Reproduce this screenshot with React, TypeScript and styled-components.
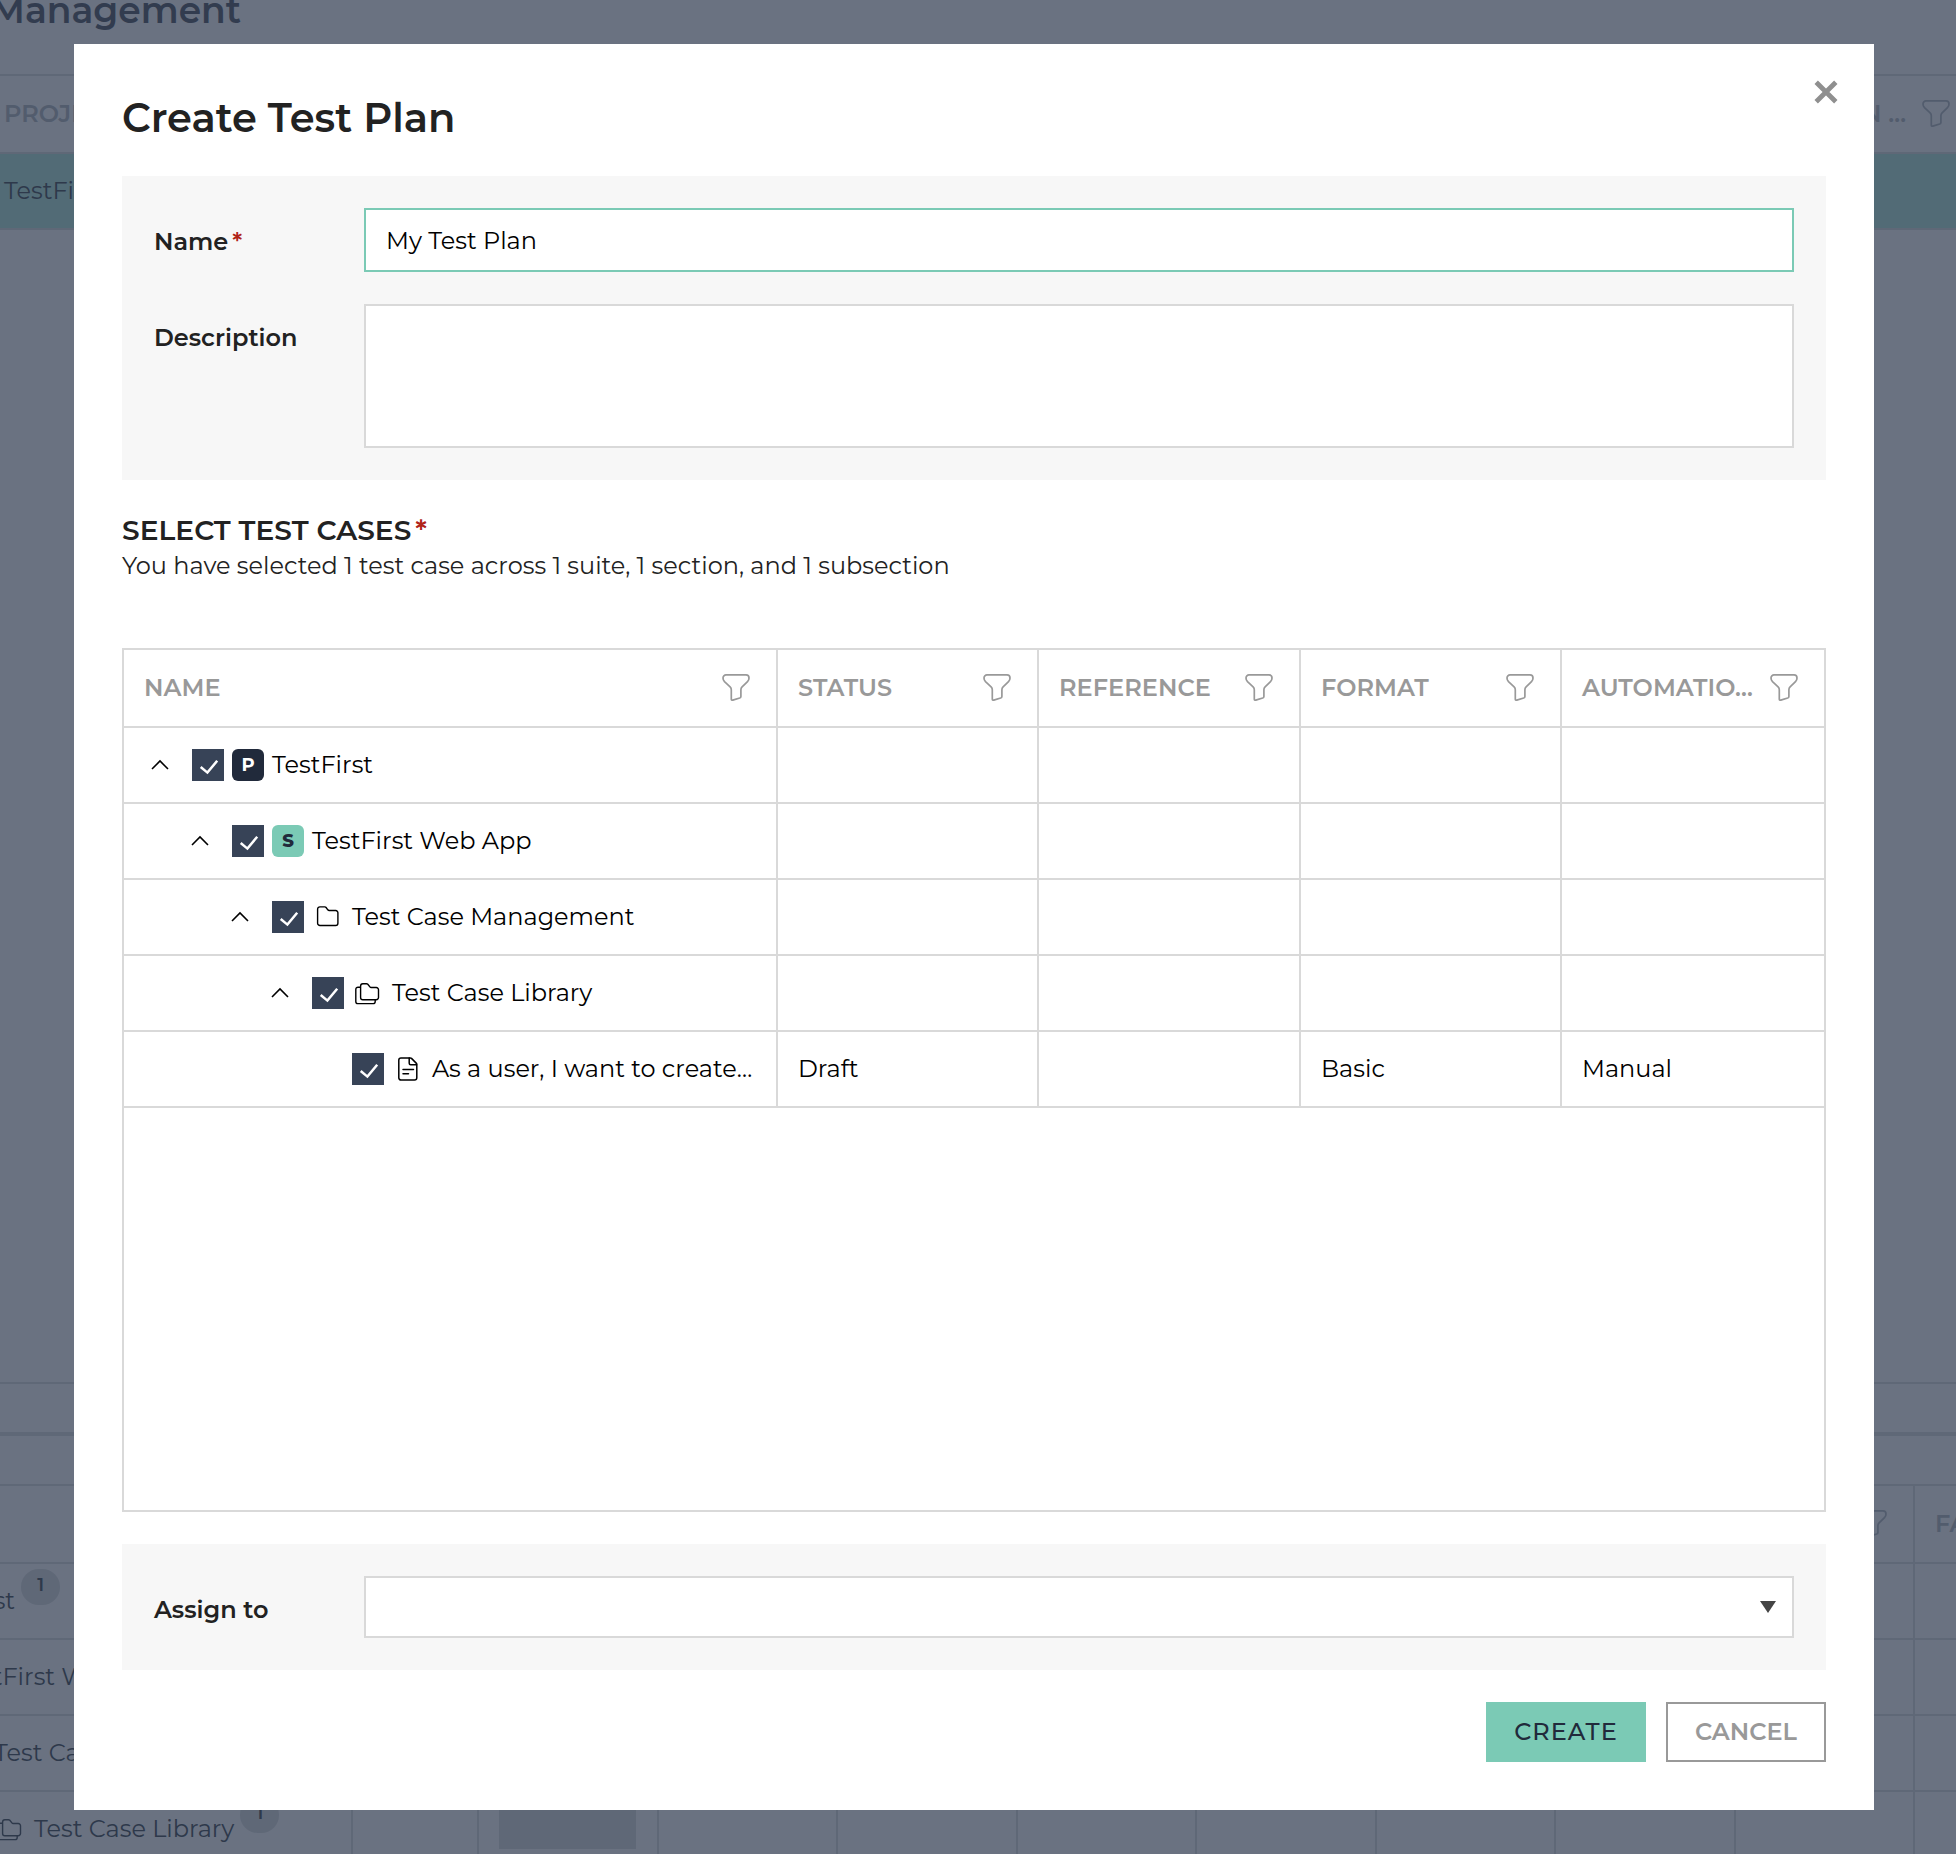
import React from 'react';
import styled, { createGlobalStyle, css } from 'styled-components';

const color = {
  backdrop: '#6a7281',
  backdropLine: '#5f6877',
  backdropMuted: '#525c6d',
  backdropText: '#2e394b',
  backdropTitle: '#323c4f',
  backdropRow: '#526b76',
  line: '#d9d9d9',
  muted: '#999999',
  ink: '#222222',
  mint: '#7bcab5',
  navy: '#212a3b',
  slate: '#374357',
  panel: '#f7f7f7',
  danger: '#b02318',
};

const GlobalStyle = createGlobalStyle`
  *, *::before, *::after { box-sizing: border-box; }
  body {
    margin: 0;
    overflow: hidden;
    background: ${color.backdrop};
    font-family: Montserrat, Inter, 'Liberation Sans', sans-serif;
    font-size: 24px;
  }
  button, input, textarea { font: inherit; border-radius: 0; margin: 0; }
`;

/* ---------- icons ---------- */

const IconSvg = styled.svg`
  display: block;
  flex: none;
  fill: none;
  stroke: currentColor;
  stroke-linecap: round;
  stroke-linejoin: round;
`;

const FilterIcon = () => (
  <IconSvg width="28" height="28" viewBox="0 0 28 28" strokeWidth="1.7">
    <path d="M4 .9h20a3 3 0 0 1 3 3c0 1.700-.4 2.700-1.500 3.800l-5.400 5.200c-.9.9-1.200 1.700-1.200 2.800v6.700c0 .8-.4 1.300-1.200 1.600l-6.900 2.100c-.9.300-1.500-.1-1.500-.9v-9.500c0-1.100-.3-1.900-1.200-2.800L2.500 7.700C1.400 6.600 1 5.600 1 3.900a3 3 0 0 1 3-3z" />
  </IconSvg>
);

const CloseIcon = () => (
  <IconSvg width="24" height="24" viewBox="0 0 24 24" strokeWidth="4.800">
    <path d="M2.200 2.200l19.600 19.600M21.800 2.200L2.200 21.800" strokeLinecap="butt" />
  </IconSvg>
);

const ChevronUpIcon = () => (
  <IconSvg width="32" height="32" viewBox="0 0 32 32" strokeWidth="1.6">
    <path d="M8 20L16 12 24 20" strokeLinecap="butt" strokeLinejoin="miter" />
  </IconSvg>
);

const CheckIcon = () => (
  <IconSvg width="32" height="32" viewBox="0 0 32 32" strokeWidth="2.500">
    <path d="M8.700 18l6.700 5.600L25.200 11.800" strokeLinecap="butt" strokeLinejoin="miter" />
  </IconSvg>
);

const FolderIcon = () => (
  <IconSvg width="32" height="32" viewBox="0 0 32 32" strokeWidth="1.400">
    <path
      transform="translate(4.700 5)"
      d="M.9 3.200A2.300 2.300 0 0 1 3.200.9h4.900c.6 0 1 .2 1.300.6l1.700 2.300c.4.500.8.7 1.400.7h6.500a2.200 2.200 0 0 1 2.200 2.200v10.500a2.300 2.300 0 0 1-2.300 2.300H3.200a2.300 2.300 0 0 1-2.300-2.300z"
    />
  </IconSvg>
);

const FoldersIcon = () => (
  <IconSvg width="32" height="32" viewBox="0 0 32 32" strokeWidth="1.400">
    <g transform="translate(3 6)">
      <path d="M5.600 3A2.200 2.200 0 0 1 7.800.8h3.700c.6 0 1 .2 1.300.5l2.100 2.600c.3.400.7.600 1.300.6h5.100a2.200 2.200 0 0 1 2.200 2.200v7.800a2.200 2.200 0 0 1-2.200 2.200H7.800a2.200 2.200 0 0 1-2.200-2.200z" />
      <path d="M5.300 4.200H3A2.200 2.200 0 0 0 .8 6.400v12a2.200 2.200 0 0 0 2.200 2.200h15a2.200 2.200 0 0 0 2.200-2.200v-1.500" />
    </g>
  </IconSvg>
);

const DocumentIcon = () => (
  <IconSvg width="32" height="32" viewBox="0 0 32 32" strokeWidth="1.500">
    <g transform="translate(6 4)">
      <path d="M3 .9h9.300c.5 0 .9.2 1.200.5l4.700 4.700c.4.400.6.800.6 1.300v13.300a2.300 2.300 0 0 1-2.300 2.300H3a2.200 2.200 0 0 1-2.200-2.200V3A2.200 2.200 0 0 1 3 .9z" />
      <path d="M11.200 1v5.300c0 .9.600 1.500 1.500 1.500h5.900M5 12.400h10.500M5 16.700h5.500" />
    </g>
  </IconSvg>
);

const CaretIcon = () => (
  <IconSvg width="16" height="12" viewBox="0 0 16 12">
    <path d="M0 0h16L8 12z" fill="#444444" stroke="none" />
  </IconSvg>
);

/* ---------- page behind the dialog ---------- */

const Page = styled.main`
  display: flex;
  flex-direction: column;
  height: 1854px;
  overflow: hidden;
  background: ${color.backdrop};
  color: ${color.backdropText};
  white-space: nowrap;
`;

const PageTitle = styled.h1`
  display: flex;
  justify-content: flex-end;
  width: 241px;
  height: 74px;
  margin: 0;
  flex: none;
  color: ${color.backdropTitle};
  font-size: 36px;
  font-weight: 600;
  line-height: 20px;
`;

const ProjectTable = styled.section`
  flex: none;
  height: 1308px;
  border-top: 2px solid ${color.backdropLine};
`;

const ProjectHeader = styled.div`
  display: flex;
  align-items: center;
  justify-content: space-between;
  height: 78px;
  padding: 0 6px 0 4px;
  border-bottom: 2px solid ${color.backdropLine};
  color: ${color.backdropMuted};
  font-weight: 600;
  line-height: 30px;
`;

const HeaderGroup = styled.span`
  display: flex;
  align-items: center;
  gap: 16px;
`;

const ProjectRow = styled.div`
  height: 76px;
  padding-left: 4px;
  border-bottom: 2px solid ${color.backdropLine};
  background: ${color.backdropRow};
  line-height: 74px;
`;

const Splitter = styled.div`
  flex: none;
  height: 102px;
  padding-top: 48px;
  border-top: 2px solid ${color.backdropLine};

  &::before {
    content: '';
    display: block;
    height: 4px;
    background: ${color.backdropLine};
  }
`;

const RunGrid = styled.section`
  display: grid;
  flex: none;
  width: 2094.500px;
  grid-template-columns: 353px 126px repeat(9, 179.500px);
  grid-template-rows: 78px repeat(4, 76px);
  border-top: 2px solid ${color.backdropLine};
`;

const RunCell = styled.div<{ $header?: boolean; $open?: boolean }>`
  display: flex;
  align-items: center;
  justify-content: ${(p) => (p.$header ? 'space-between' : 'flex-start')};
  min-width: 0;
  padding: 0 26px 0 20px;
  border-right: ${(p) => (p.$open ? 0 : 2)}px solid ${color.backdropLine};
  border-bottom: 2px solid ${color.backdropLine};
  line-height: 30px;
  ${(p) =>
    p.$header &&
    css`
      color: ${color.backdropMuted};
      font-weight: 600;
    `}
`;

const RunName = styled(RunCell)<{ $level: number }>`
  gap: 8px;
  padding: 0;

  &::before {
    content: '';
    flex: none;
    width: 0;
    margin-left: ${(p) => p.$level * 40 - 134}px;
  }
`;

const IconSlot = styled.span`
  display: flex;
  flex: none;
  width: 32px;
`;

const CountPill = styled.span`
  flex: none;
  align-self: flex-start;
  width: 39px;
  height: 36px;
  margin: 5px 0 0 -2px;
  border-radius: 18px;
  background: ${color.backdropLine};
  font-size: 18px;
  font-weight: 600;
  line-height: 33px;
  text-align: center;
`;

const ProgressBlock = styled.span`
  flex: none;
  width: 137px;
  height: 40px;
  background: ${color.backdropLine};
`;

/* ---------- dialog ---------- */

const Overlay = styled.div`
  position: fixed;
  inset: 0;
  display: flex;
  align-items: flex-start;
  padding: 44px 0 0 74px;
`;

const Dialog = styled.div`
  position: relative;
  display: flex;
  flex-direction: column;
  width: 1800px;
  height: 1766px;
  padding: 48px;
  background: #ffffff;
  color: ${color.ink};
`;

const CloseButton = styled.button`
  position: absolute;
  top: 36px;
  right: 36px;
  padding: 0;
  border: 0;
  background: none;
  color: #8f8f8f;
`;

const DialogTitle = styled.h2`
  margin: 0 0 32px;
  font-size: 40px;
  font-weight: 600;
  line-height: 52px;
`;

const Panel = styled.div`
  display: flex;
  flex-direction: column;
  gap: 32px;
  padding: 32px;
  background: ${color.panel};
`;

const Field = styled.label`
  display: grid;
  grid-template-columns: 210px 1fr;
  align-items: start;
`;

const FieldLabel = styled.span`
  padding-top: 19px;
  font-weight: 600;
  line-height: 30px;
`;

const Required = styled.span`
  margin-left: 4px;
  color: ${color.danger};
`;

const control = css`
  display: block;
  width: 100%;
  border: 2px solid ${color.line};
  background: #ffffff;
  outline: none;
`;

const TextInput = styled.input`
  ${control}
  height: 64px;
  padding: 0 20px;
  border-color: ${color.mint};
  color: #000000;
`;

const TextArea = styled.textarea`
  ${control}
  height: 144px;
  padding: 16px 20px;
  resize: none;
`;

const SelectBox = styled.div`
  ${control}
  display: flex;
  align-items: center;
  justify-content: flex-end;
  height: 62px;
  padding-right: 16px;
`;

const SectionHeading = styled.h3`
  margin: 32px 0 0;
  font-size: 28px;
  font-weight: 600;
  letter-spacing: 0.06px;
  line-height: 36px;
`;

const Summary = styled.p`
  margin: 0 0 64px;
  line-height: 36px;
`;

const CaseTable = styled.div`
  height: 864px;
  margin-bottom: 32px;
  border: 2px solid ${color.line};
`;

const CaseRow = styled.div<{ $header?: boolean }>`
  display: grid;
  grid-template-columns: 654px 261px 262px 261px 262px;
  height: ${(p) => (p.$header ? 78 : 76)}px;
  border-bottom: 2px solid ${color.line};
`;

const Cell = styled.div`
  display: flex;
  align-items: center;
  min-width: 0;
  padding: 0 20px;
  border-right: 2px solid ${color.line};
  color: #000000;
  line-height: 30px;
  white-space: nowrap;

  &:last-child {
    border-right: 0;
  }
`;

const HeaderCell = styled(Cell)`
  justify-content: space-between;
  padding-right: 26px;
  color: ${color.muted};
  font-weight: 600;
  letter-spacing: 0.06px;
`;

const NameCell = styled(Cell)<{ $level: number }>`
  gap: 8px;
  padding-left: ${(p) => 20 + p.$level * 40}px;
`;

const Toggle = styled.span`
  display: flex;
  flex: none;
  width: 32px;
  height: 32px;
  margin-right: 8px;
`;

const Checkbox = styled.span`
  flex: none;
  width: 32px;
  height: 32px;
  background: ${color.slate};
  color: #ffffff;
`;

const Badge = styled.span<{ $suite?: boolean }>`
  flex: none;
  width: 32px;
  height: 32px;
  border-radius: 6px;
  background: ${(p) => (p.$suite ? color.mint : color.navy)};
  color: ${(p) => (p.$suite ? color.navy : '#ffffff')};
  font-size: 18px;
  font-weight: ${(p) => (p.$suite ? 800 : 700)};
  line-height: 32px;
  text-align: center;
`;

const Actions = styled.div`
  display: flex;
  justify-content: flex-end;
  gap: 20px;
  margin-top: 32px;
`;

const Button = styled.button<{ $primary?: boolean }>`
  width: 160px;
  height: 60px;
  padding: 0;
  border: 2px solid ${(p) => (p.$primary ? color.mint : color.muted)};
  background: ${(p) => (p.$primary ? color.mint : '#ffffff')};
  color: ${(p) => (p.$primary ? color.navy : color.muted)};
  font-weight: ${(p) => (p.$primary ? 500 : 600)};
  letter-spacing: ${(p) => (p.$primary ? 1 : 0)}px;
  line-height: 56px;
`;

/* ---------- data ---------- */

const columns = ['NAME', 'STATUS', 'REFERENCE', 'FORMAT', 'AUTOMATIO…'];

type Row = { name: string; icon: React.ReactNode; leaf?: boolean; cells?: string[] };

const rows: Row[] = [
  { name: 'TestFirst', icon: <Badge>P</Badge> },
  { name: 'TestFirst Web App', icon: <Badge $suite>S</Badge> },
  { name: 'Test Case Management', icon: <FolderIcon /> },
  { name: 'Test Case Library', icon: <FoldersIcon /> },
  {
    name: 'As a user, I want to create…',
    icon: <DocumentIcon />,
    leaf: true,
    cells: ['Draft', '', 'Basic', 'Manual'],
  },
];

const runs = [
  { name: 'TestFirst', count: 1, icon: null },
  { name: 'TestFirst Web App', icon: null },
  { name: 'Test Case Management', icon: <FolderIcon /> },
  { name: 'Test Case Library', count: 1, icon: <FoldersIcon />, progress: true },
];

const runColumns = Array.from({ length: 10 }, (_, i) => i);

const Background = () => (
  <Page>
    <PageTitle>Management</PageTitle>
    <ProjectTable>
      <ProjectHeader>
        <span>PROJECT</span>
        <HeaderGroup>
          <span>DESCRIPTION …</span>
          <FilterIcon />
        </HeaderGroup>
      </ProjectHeader>
      <ProjectRow>TestFirst</ProjectRow>
    </ProjectTable>
    <Splitter />
    <RunGrid>
      <RunCell $header $open />
      {runColumns.map((i) => (
        <RunCell key={i} $header>
          <span>{i === 9 ? 'FAILED' : ''}</span>
          <FilterIcon />
        </RunCell>
      ))}
      {runs.map((run, level) => (
        <React.Fragment key={run.name}>
          <RunName $level={level}>
            <IconSlot>{run.icon}</IconSlot>
            <span>{run.name}</span>
            {run.count && <CountPill>{run.count}</CountPill>}
          </RunName>
          {runColumns.map((i) => (
            <RunCell key={i}>{run.progress && i === 1 && <ProgressBlock />}</RunCell>
          ))}
        </React.Fragment>
      ))}
    </RunGrid>
  </Page>
);

const CaseTree = () => (
  <CaseTable>
    <CaseRow $header>
      {columns.map((c) => (
        <HeaderCell key={c}>
          <span>{c}</span>
          <FilterIcon />
        </HeaderCell>
      ))}
    </CaseRow>
    {rows.map((row, level) => (
      <CaseRow key={row.name}>
        <NameCell $level={level}>
          <Toggle>{!row.leaf && <ChevronUpIcon />}</Toggle>
          <Checkbox>
            <CheckIcon />
          </Checkbox>
          {row.icon}
          <span>{row.name}</span>
        </NameCell>
        {(row.cells ?? ['', '', '', '']).map((text, i) => (
          <Cell key={i}>{text}</Cell>
        ))}
      </CaseRow>
    ))}
  </CaseTable>
);

export default function App() {
  return (
    <>
      <GlobalStyle />
      <Background />
      <Overlay>
        <Dialog role="dialog" aria-label="Create Test Plan">
          <CloseButton aria-label="Close">
            <CloseIcon />
          </CloseButton>
          <DialogTitle>Create Test Plan</DialogTitle>
          <Panel>
            <Field>
              <FieldLabel>
                Name<Required>*</Required>
              </FieldLabel>
              <TextInput defaultValue="My Test Plan" />
            </Field>
            <Field>
              <FieldLabel>Description</FieldLabel>
              <TextArea />
            </Field>
          </Panel>
          <SectionHeading>
            SELECT TEST CASES<Required>*</Required>
          </SectionHeading>
          <Summary>You have selected 1 test case across 1 suite, 1 section, and 1 subsection</Summary>
          <CaseTree />
          <Panel>
            <Field as="div">
              <FieldLabel>Assign to</FieldLabel>
              <SelectBox>
                <CaretIcon />
              </SelectBox>
            </Field>
          </Panel>
          <Actions>
            <Button $primary>CREATE</Button>
            <Button>CANCEL</Button>
          </Actions>
        </Dialog>
      </Overlay>
    </>
  );
}
